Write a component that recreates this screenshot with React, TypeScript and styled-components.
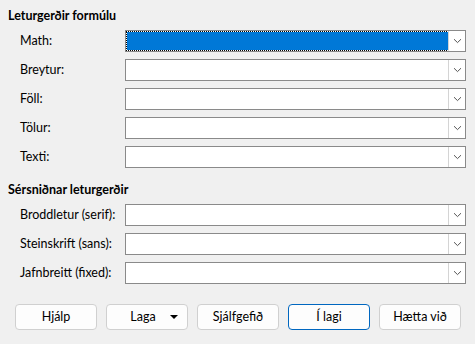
import styled, { createGlobalStyle } from "styled-components";

const GlobalStyle = createGlobalStyle`
  html, body {
    margin: 0;
    padding: 0;
    background: #f0f0f0;
  }
  body {
    font-family: "Segoe UI", Lato, "Noto Sans", sans-serif;
    font-size: 12.5px;
    color: #000;
  }
`;

const SECTIONS = [
  {
    title: "Leturgerðir formúlu",
    rows: ["Math:", "Breytur:", "Föll:", "Tölur:", "Texti:"],
  },
  {
    title: "Sérsniðnar leturgerðir",
    rows: ["Broddletur (serif):", "Steinskrift (sans):", "Jafnbreitt (fixed):"],
  },
];

function Chevron() {
  return (
    <svg width="9" height="6" viewBox="0 0 9 6">
      <path d="M1 1.2 L4.5 4.6 L8 1.2" fill="none" stroke="#555" strokeWidth="1" />
    </svg>
  );
}

function Combo({ focused }: { focused?: boolean }) {
  return (
    <ComboBox>
      <ComboField $focused={!!focused} />
      <DropButton>
        <Chevron />
      </DropButton>
    </ComboBox>
  );
}

export default function App() {
  return (
    <>
      <GlobalStyle />
      <Dialog>
        {SECTIONS.map((s, si) => (
          <Section key={s.title} $first={si === 0}>
            <Heading>{s.title}</Heading>
            <Rows>
              {s.rows.map((label, i) => (
                <Row key={label}>
                  <Label>{label}</Label>
                  <Combo focused={si === 0 && i === 0} />
                </Row>
              ))}
            </Rows>
          </Section>
        ))}
        <ButtonBar>
          <Button>Hjálp</Button>
          <Button>
            <MenuLabel>Laga</MenuLabel>
            <Caret />
          </Button>
          <Button>Sjálfgefið</Button>
          <Button $primary>Í lagi</Button>
          <Button>Hætta við</Button>
        </ButtonBar>
      </Dialog>
    </>
  );
}

const Dialog = styled.div`
  width: 475px;
  height: 344px;
  box-sizing: border-box;
  padding: 6px 9px 0 8px;
  display: flex;
  flex-direction: column;
`;

const Section = styled.div<{ $first: boolean }>`
  display: flex;
  flex-direction: column;
  margin-top: ${(p) => (p.$first ? 0 : 12)}px;
`;

const Heading = styled.div`
  font-weight: 700;
  line-height: 20px;
  height: 20px;
  margin-bottom: 4px;
`;

const Rows = styled.div`
  display: flex;
  flex-direction: column;
  gap: 7px;
`;

const Row = styled.div`
  display: grid;
  grid-template-columns: 117px 1fr;
  align-items: center;
  height: 22px;
`;

const Label = styled.span`
  padding-left: 12px;
  line-height: 22px;
  white-space: nowrap;
`;

const ComboBox = styled.div`
  height: 22px;
  box-sizing: border-box;
  border: 1px solid #8a8a8a;
  background: #fff;
  display: flex;
`;

const ComboField = styled.div<{ $focused: boolean }>`
  flex: 1;
  box-sizing: border-box;
  margin: 1px 0 1px 1px;
  background: ${(p) => (p.$focused ? "#0078d7" : "#fff")};
  outline: ${(p) => (p.$focused ? "1px dotted #000" : "none")};
  outline-offset: 0;
`;

const DropButton = styled.div`
  width: 17px;
  box-sizing: border-box;
  border-left: 1px solid #d4d4d4;
  background: #fff;
  display: flex;
  align-items: center;
  justify-content: center;
`;

const ButtonBar = styled.div`
  margin-top: 20px;
  padding-left: 7px;
  display: flex;
  gap: 9px;
`;

const Button = styled.div<{ $primary?: boolean }>`
  width: 82px;
  height: 26px;
  box-sizing: border-box;
  border: 1px solid ${(p) => (p.$primary ? "#0067c0" : "#d0d0d0")};
  border-radius: 4px;
  background: #fdfdfd;
  display: flex;
  align-items: center;
  justify-content: center;
  position: relative;
  line-height: 24px;
`;

const MenuLabel = styled.span`
  margin-right: 8px;
`;

const Caret = styled.span`
  position: absolute;
  right: 9px;
  top: 10px;
  width: 0;
  height: 0;
  border-left: 4px solid transparent;
  border-right: 4px solid transparent;
  border-top: 4px solid #000;
`;
